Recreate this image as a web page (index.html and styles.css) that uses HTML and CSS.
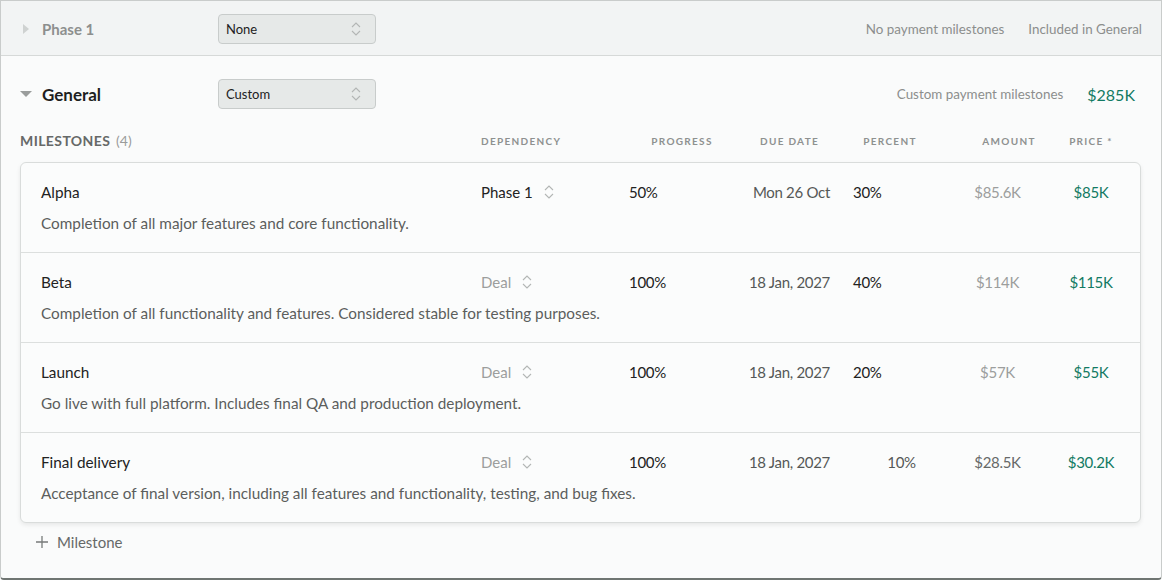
FILE: index.html
```html
<!DOCTYPE html>
<html lang="en">

<head>
    <meta charset="UTF-8">
    <meta name="viewport" content="width=device-width, initial-scale=1.0">
    <title>Payment milestones</title>
    <link rel="stylesheet" href="styles.css">
</head>

<body>
    <div class="frame">
        <!-- Collapsed phase -->
        <div class="phase phase-collapsed">
            <div class="phase-left">
                <span class="caret caret-right"></span>
                <span class="phase-name">Phase 1</span>
            </div>
            <div class="select">
                <span>None</span>
                <svg class="updown" viewBox="0 0 12 16"><path d="M2 6l4-4 4 4M2 10l4 4 4-4" /></svg>
            </div>
            <div class="phase-right">
                <span class="meta">No payment milestones</span>
                <span class="meta">Included in General</span>
            </div>
        </div>

        <!-- Expanded phase -->
        <div class="phase-open">
            <div class="phase">
                <div class="phase-left">
                    <span class="caret caret-down"></span>
                    <span class="phase-name active">General</span>
                </div>
                <div class="select">
                    <span>Custom</span>
                    <svg class="updown" viewBox="0 0 12 16"><path d="M2 6l4-4 4 4M2 10l4 4 4-4" /></svg>
                </div>
                <div class="phase-right">
                    <span class="meta">Custom payment milestones</span>
                    <span class="total">$285K</span>
                </div>
            </div>

            <div class="cols">
                <div class="section-title">Milestones <span class="count">(4)</span></div>
                <div class="col-head">Dependency</div>
                <div class="col-head center">Progress</div>
                <div class="col-head center due-head">Due date</div>
                <div class="col-head center">Percent</div>
                <div class="col-head center">Amount</div>
                <div class="col-head center">Price *</div>
            </div>

            <div class="card" id="milestones"></div>

            <div class="add">
                <svg class="plus" viewBox="0 0 14 14"><path d="M7 1v12M1 7h12" /></svg>
                <span>Milestone</span>
            </div>
        </div>
    </div>

    <script>
        const milestones = [
            { name: "Alpha", desc: "Completion of all major features and core functionality.", dep: "Phase 1", progress: "50%", due: "Mon 26 Oct", percent: "30%", amount: "$85.6K", price: "$85K" },
            { name: "Beta", desc: "Completion of all functionality and features. Considered stable for testing purposes.", dep: "Deal", progress: "100%", due: "18 Jan, 2027", percent: "40%", amount: "$114K", price: "$115K" },
            { name: "Launch", desc: "Go live with full platform. Includes final QA and production deployment.", dep: "Deal", progress: "100%", due: "18 Jan, 2027", percent: "20%", amount: "$57K", price: "$55K" },
            { name: "Final delivery", desc: "Acceptance of final version, including all features and functionality, testing, and bug fixes.", dep: "Deal", progress: "100%", due: "18 Jan, 2027", percent: "10%", amount: "$28.5K", price: "$30.2K", edited: true }
        ];

        const card = document.getElementById("milestones");
        const updown = '<svg class="updown" viewBox="0 0 12 16"><path d="M2 6l4-4 4 4M2 10l4 4 4-4" /></svg>';

        milestones.forEach(function (m) {
            const row = document.createElement("div");
            row.className = "row" + (m.edited ? " edited" : "");
            row.innerHTML =
                '<div class="name">' + m.name + '</div>' +
                '<div class="dep' + (m.dep === "Deal" ? " muted" : "") + '"><span>' + m.dep + '</span>' + updown + '</div>' +
                '<div class="num progress">' + m.progress + '</div>' +
                '<div class="num due">' + m.due + '</div>' +
                '<div class="num percent">' + m.percent + '</div>' +
                '<div class="num amount">' + m.amount + '</div>' +
                '<div class="num price">' + m.price + '</div>' +
                '<div class="desc">' + m.desc + '</div>';
            card.appendChild(row);
        });
    </script>
</body>

</html>
```

FILE: styles.css
```css
/* General Styles */
* {
    margin: 0;
    padding: 0;
    box-sizing: border-box;
}

body {
    font-family: Lato, "Noto Sans", sans-serif;
    color: #222;
    background: #fff;
}

.frame {
    width: 1162px;
    height: 580px;
    border: 1px solid #c9cccb;
    border-bottom: 2px solid #6f7572;
    border-radius: 0 0 4px 4px;
    background: #fafbfb;
    overflow: hidden;
}

/* Phase headers */
.phase {
    display: flex;
    align-items: center;
    padding: 0 19px 0 19px;
}

.phase-collapsed {
    height: 55px;
    padding-top: 1px;
    background: #f2f4f4;
    border-bottom: 1px solid #d6d9d8;
}

.phase-open .phase {
    height: 30px;
    margin-top: 23px;
}

.phase-left {
    width: 198px;
    display: flex;
    align-items: center;
}

.caret {
    width: 0;
    height: 0;
    margin-right: 10px;
}

.caret-right {
    margin-left: 3px;
    border-top: 5px solid transparent;
    border-bottom: 5px solid transparent;
    border-left: 6px solid #cfd2d1;
    margin-right: 13px;
}

.caret-down {
    border-left: 6px solid transparent;
    border-right: 6px solid transparent;
    border-top: 6px solid #9a9d9c;
}

.phase-name {
    font-size: 15px;
    font-weight: 700;
    color: #8d8f8e;
}

.phase-name.active {
    font-size: 17px;
    color: #1e1f1f;
}

.select {
    width: 158px;
    height: 30px;
    display: flex;
    align-items: center;
    justify-content: space-between;
    padding: 0 13px 0 7px;
    background: #e6e9e8;
    border: 1px solid #c8cccb;
    border-radius: 4px;
    font-size: 13px;
    color: #222;
}

.updown {
    width: 12px;
    height: 16px;
    fill: none;
    stroke: #b3b6b5;
    stroke-width: 1.1;
}

.phase-right {
    margin-left: auto;
    display: flex;
    align-items: center;
    gap: 24px;
}

.meta {
    font-size: 13.4px;
    color: #8c8e8d;
}

.total {
    font-size: 16px;
    color: #127a63;
    margin-right: 7px;
}

/* Milestone columns */
.cols,
.row {
    display: grid;
    grid-template-columns: 440px 148px 106px 95px 120px 95px 92px;
    align-items: center;
}

.cols {
    margin: 23px 0 0 19px;
    grid-template-columns: 461px 148px 106px 95px 120px 95px 92px;
    height: 16px;
}

.section-title {
    font-size: 14px;
    font-weight: 700;
    letter-spacing: 0.4px;
    text-transform: uppercase;
    color: #666968;
}

.count {
    font-weight: 400;
    color: #9a9c9b;
    letter-spacing: 0;
    margin-left: 2px;
}

.col-head {
    font-size: 10px;
    font-weight: 700;
    letter-spacing: 1.3px;
    text-transform: uppercase;
    color: #8e9190;
}

.col-head.center {
    text-align: center;
}

.cols .col-head:nth-child(6) {
    padding-left: 23px;
}

.due-head {
    padding-left: 14px;
}

.card {
    margin: 14px 20px 0 19px;
    background: #fbfcfc;
    border: 1px solid #d9dcdb;
    border-radius: 6px;
    box-shadow: 0 2px 4px rgba(0, 0, 0, 0.08);
}

.row {
    padding: 19px 3px 19px 20px;
    border-bottom: 1px solid #dcdfde;
    grid-template-rows: 20px 20px;
    row-gap: 11px;
}

.row:last-child {
    border-bottom: none;
}

.name {
    font-size: 15.3px;
    color: #222;
}

.desc {
    grid-column: 1 / -1;
    font-size: 15.3px;
    color: #5c5e5d;
}

.dep {
    display: flex;
    align-items: center;
    gap: 10px;
    font-size: 15px;
    color: #222;
}

.dep.muted {
    color: #9c9e9d;
}

.num {
    font-size: 15px;
    letter-spacing: -0.3px;
}

.due {
    text-align: right;
    color: #555857;
}

.percent {
    padding-left: 23px;
}

.edited .percent {
    text-align: center;
    color: #555857;
}

.amount {
    text-align: center;
    color: #9c9e9d;
}

.edited .amount {
    color: #666968;
}

.price {
    text-align: center;
    color: #127a63;
}

/* Add milestone link */
.add {
    display: flex;
    align-items: center;
    gap: 8px;
    margin: 10px 0 0 34px;
    font-size: 15px;
    color: #666968;
}

.plus {
    width: 14px;
    height: 14px;
    stroke: #777a79;
    stroke-width: 1.3;
}
```
